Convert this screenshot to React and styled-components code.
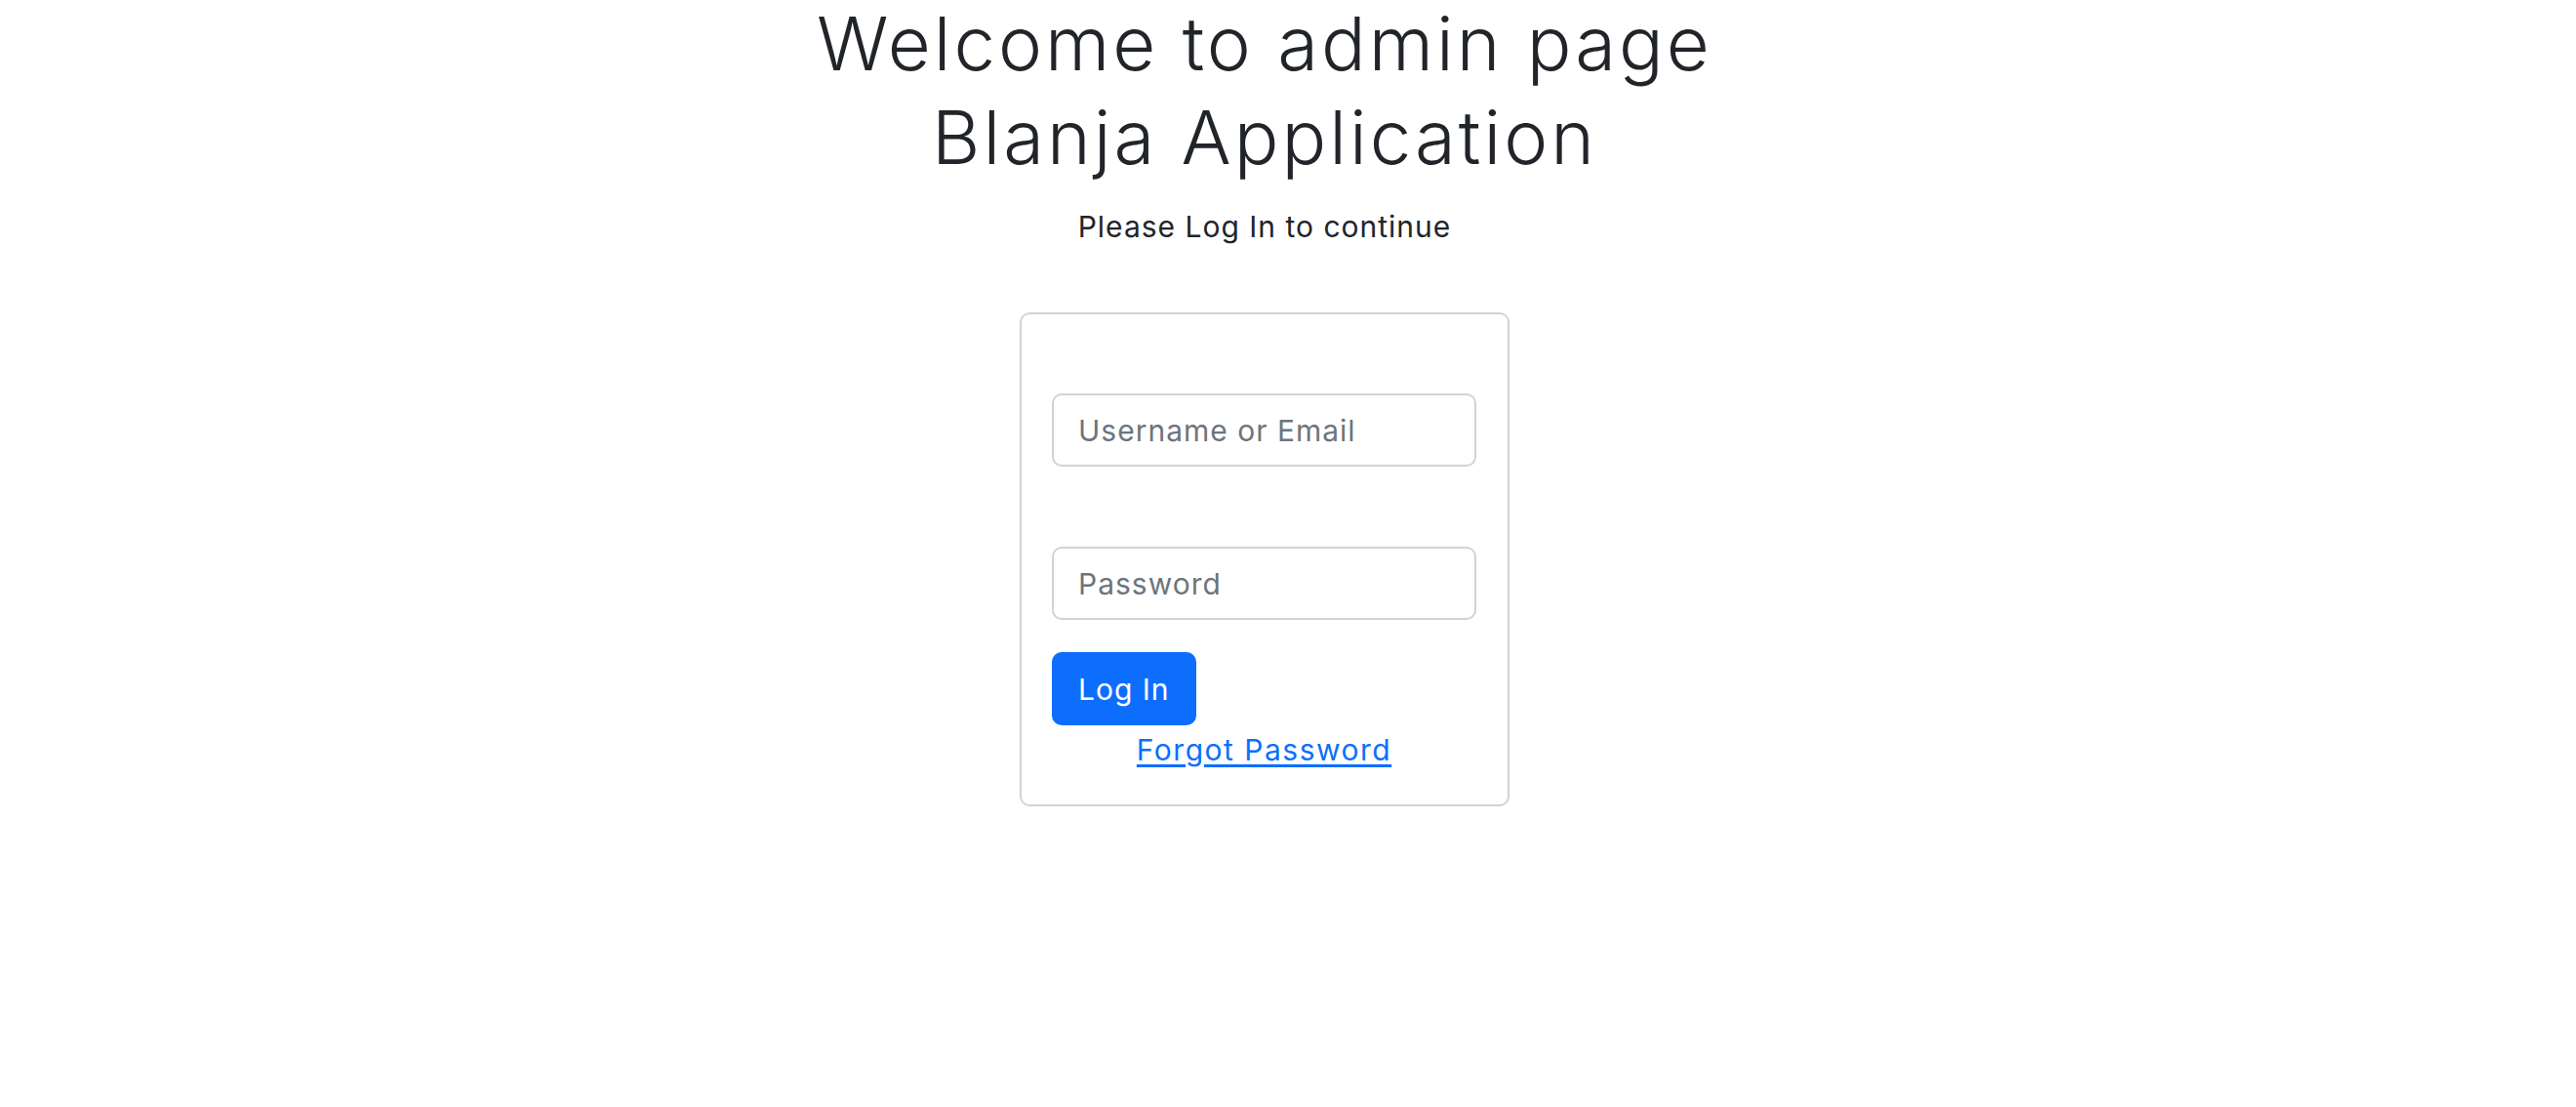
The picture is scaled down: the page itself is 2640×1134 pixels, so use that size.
import React, { useState } from "react";
import styled, { createGlobalStyle } from "styled-components";

const GlobalStyle = createGlobalStyle`
  * {
    box-sizing: border-box;
  }
  body {
    margin: 0;
    background: #fff;
    color: #212529;
    font-family: Inter, "Open Sans", "Liberation Sans", sans-serif;
  }
`;

const Page = styled.div`
  display: flex;
  flex-direction: column;
  align-items: center;
  padding-right: 48px;
  text-align: center;
`;

const Title = styled.h1`
  margin: -4px 0 0;
  font-size: 76px;
  font-weight: 300;
  line-height: 96px;
  letter-spacing: 3px;
  color: #212529;
`;

const Subtitle = styled.p`
  margin: 22px 0 0;
  font-size: 30px;
  line-height: 45px;
  letter-spacing: 1px;
  color: #212529;
`;

const Card = styled.div`
  margin-top: 65px;
  width: 502px;
  padding: 81px 32px 33px 31px;
  border: 2px solid #d3d3d3;
  border-radius: 10px;
  text-align: left;
`;

const Form = styled.form`
  display: flex;
  flex-direction: column;
  align-items: flex-start;
`;

const Input = styled.input`
  display: block;
  width: 100%;
  height: 75px;
  margin-bottom: ${(p) => p.$gap || 0}px;
  padding: 0 25px;
  border: 2px solid #ced4da;
  border-radius: 10px;
  font-family: inherit;
  font-size: 30px;
  letter-spacing: 1px;
  color: #212529;
  outline: none;
  &::placeholder {
    color: #6c757d;
  }
`;

const Button = styled.button`
  height: 75px;
  padding: 0 27px;
  border: none;
  border-radius: 10px;
  background: #0d6efd;
  color: #fff;
  font-family: inherit;
  font-size: 30px;
  letter-spacing: 1px;
  cursor: pointer;
`;

const Forgot = styled.a`
  display: block;
  align-self: stretch;
  margin-top: 3px;
  text-align: center;
  font-size: 30px;
  line-height: 45px;
  letter-spacing: 1.5px;
  color: #0d6efd;
  text-decoration: underline;
  text-underline-offset: 4px;
`;

export default function App() {
  const [user, setUser] = useState("");
  const [pass, setPass] = useState("");

  return (
    <>
      <GlobalStyle />
      <Page>
        <Title>
          Welcome to admin page
          <br />
          Blanja Application
        </Title>
        <Subtitle>Please Log In to continue</Subtitle>
        <Card>
          <Form onSubmit={(e) => e.preventDefault()}>
            <Input
              $gap={82}
              type="text"
              placeholder="Username or Email"
              value={user}
              onChange={(e) => setUser(e.target.value)}
            />
            <Input
              $gap={33}
              type="password"
              placeholder="Password"
              value={pass}
              onChange={(e) => setPass(e.target.value)}
            />
            <Button type="submit">Log In</Button>
            <Forgot href="#">Forgot Password</Forgot>
          </Form>
        </Card>
      </Page>
    </>
  );
}
